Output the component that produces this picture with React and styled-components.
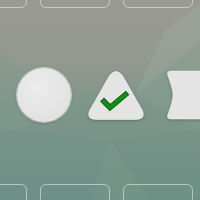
import React from "react";
import styled, { createGlobalStyle } from "styled-components";

const Global = createGlobalStyle`
  html, body { margin: 0; padding: 0; }
  body { font-family: "Liberation Sans", Arial, sans-serif; }
`;

const Board = styled.div`
  position: relative;
  width: 200px;
  height: 200px;
  overflow: hidden;
  background: linear-gradient(180deg, #9a9a94 0%, #94998f 28%, #7f968a 52%, #6e9186 100%);
  display: flex;
  flex-direction: column;
`;

const Facets = styled.svg`
  position: absolute;
  inset: 0;
  pointer-events: none;
`;

const SlotRow = styled.div`
  position: relative;
  flex: none;
  display: flex;
  gap: 13px;
  margin-left: -43px;
  margin-top: ${(p) => p.$top}px;
  height: 50px;
`;

const Slot = styled.div`
  flex: 0 0 70px;
  box-sizing: border-box;
  border: 1.5px solid rgba(222, 226, 222, 0.65);
  border-radius: 6px;
`;

const ShapeRow = styled.div`
  position: relative;
  flex: none;
  display: flex;
  align-items: flex-start;
  margin-top: ${(p) => p.$top}px;
  padding-left: 17px;
  height: 54px;
`;

const Circle = styled.div`
  width: 54px;
  height: 54px;
  border-radius: 50%;
  background: radial-gradient(circle at 40% 35%, #ececec 0%, #e2e2e2 70%, #dcdcdc 100%);
  box-shadow: 0 0 0 1px rgba(255, 255, 255, 0.5), 0 1px 3px rgba(40, 60, 50, 0.35);
  flex: none;
`;

const Piece = styled.svg`
  flex: none;
  margin-left: ${(p) => p.$gap}px;
  margin-top: ${(p) => p.$dy}px;
  overflow: visible;
  filter: drop-shadow(0 1px 1.5px rgba(40, 60, 50, 0.4));
`;

export default function App() {
  return (
    <>
      <Global />
      <Board>
        <Facets width="200" height="200" viewBox="0 0 200 200">
          <polygon points="200,5 165,30 135,95 200,40" fill="#9fb3a6" opacity="0.3" />
          <polygon points="135,95 200,40 200,130" fill="#86a597" opacity="0.3" />
          <polygon points="0,50 0,130 75,115" fill="#7f9a8e" opacity="0.35" />
          <polygon points="110,140 90,200 150,200" fill="#7a978b" opacity="0.3" />
          <polygon points="110,140 200,130 200,200 150,200" fill="#6c9085" opacity="0.3" />
          <polygon points="0,130 110,140 90,200 0,200" fill="#6d9186" opacity="0.25" />
        </Facets>
        <SlotRow $top={-42}>
          <Slot />
          <Slot />
          <Slot />
        </SlotRow>
        <ShapeRow $top={60}>
          <Circle />
          <Piece $gap={17} $dy={3} width="56" height="49" viewBox="0 0 56 49">
            <path
              d="M21.5 4.5 Q28 -3.5 34.5 4.5 L54.5 39.5 Q58 48.5 47.5 48.5 L8.5 48.5 Q-2 48.5 1.5 39.5 Z"
              fill="#e4e4e4"
              stroke="rgba(255,255,255,0.6)"
              strokeWidth="0.8"
            />
            <polyline
              points="16,30.5 22,36.5 37.5,23.5"
              fill="none"
              stroke="#0f5c0f"
              strokeWidth="5.5"
              strokeLinecap="square"
            />
            <polyline
              points="16,30.5 22,36.5 37.5,23.5"
              fill="none"
              stroke="#139013"
              strokeWidth="3.6"
              strokeLinecap="square"
            />
          </Piece>
          <Piece $gap={23} $dy={3} width="50" height="48" viewBox="0 0 50 48">
            <path
              d="M4 0 L50 0 L50 48 L4 48 Q-0.5 48 0.8 43.5 Q6 30 6 24 Q6 18 0.8 4.5 Q-0.5 0 4 0 Z"
              fill="#e4e4e4"
              stroke="rgba(255,255,255,0.6)"
              strokeWidth="0.8"
            />
          </Piece>
        </ShapeRow>
        <SlotRow $top={62}>
          <Slot />
          <Slot />
          <Slot />
        </SlotRow>
      </Board>
    </>
  );
}
